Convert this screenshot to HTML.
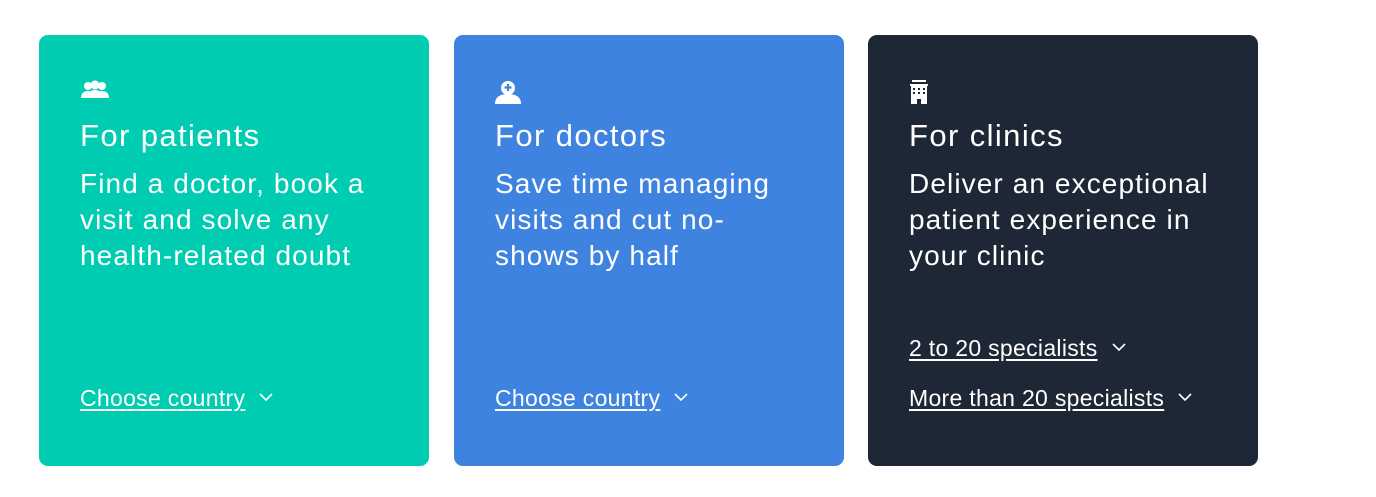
<!DOCTYPE html>
<html><head><meta charset="utf-8"><style>
html,body{margin:0;padding:0;background:#fff;width:1376px;height:497px;overflow:hidden;font-family:"Liberation Sans",sans-serif;color:#fff}
.card{position:absolute;top:35px;width:390px;height:431px;border-radius:9px}
.ic{position:absolute;left:41px;top:45px}
.t{position:absolute;left:41px;top:81px;font-size:31px;letter-spacing:1.4px;line-height:40px;white-space:nowrap}
.d{position:absolute;left:41px;top:131px;font-size:28px;letter-spacing:1.1px;line-height:36px;white-space:nowrap}
.l{position:absolute;left:41px;font-size:23px;letter-spacing:0.3px;line-height:28px;text-decoration:underline;text-underline-offset:3px;white-space:nowrap}
.l svg{margin-left:14px;vertical-align:middle;position:relative;top:-2px}
</style></head><body>
<div class="card" style="left:39px;background:#00CCB1">
 <svg class="ic" width="30" height="20" viewBox="0 0 30 20"><g fill="#fff"><circle cx="8" cy="6" r="4"/><circle cx="15" cy="5" r="4.5"/><circle cx="22" cy="6" r="4"/><path d="M1 18c0-5 3-7 7-7s4 2 4 2v5z"/><path d="M29 18c0-5-3-7-7-7s-4 2-4 2v5z"/><path d="M7 18c0-5 3-8 8-8s8 3 8 8z"/></g></svg>
 <div class="t">For patients</div>
 <div class="d">Find a doctor, book a<br>visit and solve any<br>health-related doubt</div>
 <div class="l" style="top:349px">Choose country<svg width="14" height="9" viewBox="0 0 14 9"><path d="M1 1l6 6 6-6" stroke="#fff" stroke-width="1.6" fill="none"/></svg></div>
</div>
<div class="card" style="left:454px;background:#3F83E0">
 <svg class="ic" width="26" height="24" viewBox="0 0 26 24"><g fill="#fff"><circle cx="13" cy="8" r="7"/><path d="M0 24c0-7 5-10 13-10s13 3 13 10z"/></g><path d="M13 4v7M9.5 7.5h7" stroke="#3F83E0" stroke-width="2.2"/></svg>
 <div class="t">For doctors</div>
 <div class="d">Save time managing<br>visits and cut no-<br>shows by half</div>
 <div class="l" style="top:349px">Choose country<svg width="14" height="9" viewBox="0 0 14 9"><path d="M1 1l6 6 6-6" stroke="#fff" stroke-width="1.6" fill="none"/></svg></div>
</div>
<div class="card" style="left:868px;background:#1E2736">
 <svg class="ic" width="22" height="24" viewBox="0 0 22 24"><rect x="3" y="0" width="14" height="2" fill="#fff"/><rect x="1" y="4" width="18" height="2" fill="#fff"/><path d="M2 6h16v18h-6v-5h-4v5H2z" fill="#fff"/><g fill="#1E2736"><rect x="4" y="8" width="2" height="2"/><rect x="9" y="8" width="2" height="2"/><rect x="14" y="8" width="2" height="2"/><rect x="4" y="12" width="2" height="2"/><rect x="9" y="12" width="2" height="2"/><rect x="14" y="12" width="2" height="2"/></g></svg>
 <div class="t">For clinics</div>
 <div class="d">Deliver an exceptional<br>patient experience in<br>your clinic</div>
 <div class="l" style="top:299px">2 to 20 specialists<svg width="14" height="9" viewBox="0 0 14 9"><path d="M1 1l6 6 6-6" stroke="#fff" stroke-width="1.6" fill="none"/></svg></div>
 <div class="l" style="top:349px">More than 20 specialists<svg width="14" height="9" viewBox="0 0 14 9"><path d="M1 1l6 6 6-6" stroke="#fff" stroke-width="1.6" fill="none"/></svg></div>
</div>
</body></html>
